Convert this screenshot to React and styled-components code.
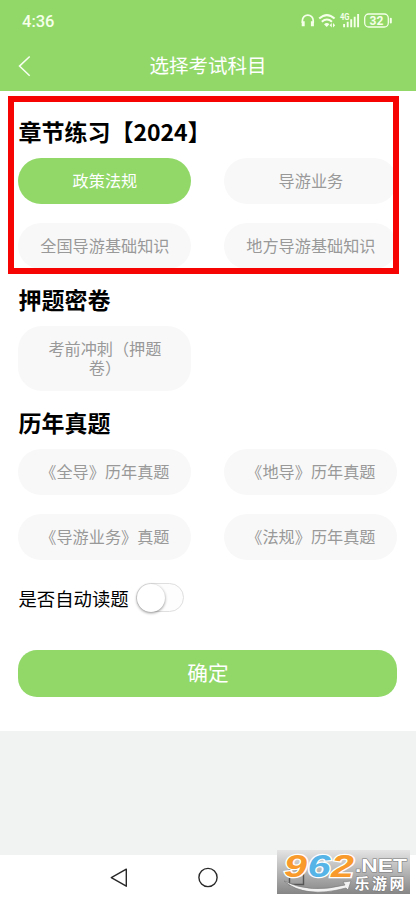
import React, { useState } from 'react';
import styled, { createGlobalStyle } from 'styled-components';

const GREEN = '#91d869';

const GlobalStyle = createGlobalStyle`
  * { box-sizing: border-box; }
  body { margin: 0; background: #f0f3f2; }
  button { font: inherit; border: 0; padding: 0; }
`;

const Screen = styled.div`
  position: relative;
  display: flex;
  flex-direction: column;
  width: 416px;
  height: 900px;
  overflow: hidden;
  background: #f0f3f2;
  font-family: "Noto Sans CJK SC", sans-serif;
`;

const Header = styled.header`
  height: 91px;
  flex: none;
  background: ${GREEN};
  color: #fff;
`;

const StatusBar = styled.div`
  display: flex;
  justify-content: space-between;
  height: 41px;
  padding: 0 23px 0 22px;
`;

const Clock = styled.span`
  font: 500 16.5px/43px Roboto, sans-serif;
  color: #f5ffe9;
`;

const StatusIcons = styled.svg`
  width: 92px;
  height: 41px;
  color: #f5ffe9;
`;

const TitleBar = styled.div`
  display: grid;
  grid-template-columns: 48px 1fr 48px;
  height: 50px;
`;

const BackButton = styled.button`
  display: flex;
  align-items: flex-start;
  padding: 13px 0 0 16px;
  background: none;
  color: #f8fff2;
`;

const PageTitle = styled.h1`
  margin: 0;
  text-align: center;
  font-size: 19.5px;
  font-weight: 400;
  line-height: 47px;
`;

const Content = styled.main`
  flex: none;
  height: 640.4px;
  padding: 23.5px 18.4px 0;
  background: #fff;
`;

const Section = styled.section`
  margin-bottom: ${(p) => p.$gap}px;
`;

const SectionTitle = styled.h2`
  margin: 0 0 10px;
  height: 33px;
  font-size: 23px;
  font-weight: 700;
  line-height: 33px;
  color: #000;
`;

const Options = styled.div`
  display: grid;
  grid-template-columns: 173px 173px;
  column-gap: 33px;
  row-gap: 18.5px;
`;

const Option = styled.button`
  min-height: 46.5px;
  padding: 13px 20px 14px;
  border-radius: 24px;
  background: ${(p) => (p.$active ? GREEN : '#f8f8f8')};
  color: ${(p) => (p.$active ? '#fff' : '#999')};
  font-size: 16.15px;
  line-height: 19px;
`;

const SettingRow = styled.label`
  display: flex;
  align-items: center;
  gap: 7px;
  height: 30px;
  font-size: 18.4px;
  line-height: 28px;
`;

const Toggle = styled.button`
  width: 48px;
  height: 29.5px;
  border: 1px solid #dfdfdf;
  border-radius: 15px;
  background: #fdfdfd;
`;

const Thumb = styled.span`
  display: block;
  width: 28.5px;
  height: 28.5px;
  margin-left: ${(p) => (p.$on ? 18 : 0)}px;
  border-radius: 50%;
  background: #fff;
  box-shadow: 0 1px 3px rgba(0, 0, 0, 0.45);
`;

const ConfirmButton = styled.button`
  display: block;
  width: 379px;
  height: 47.5px;
  margin-top: 37px;
  padding-bottom: 3px;
  border-radius: 19px;
  background: ${GREEN};
  color: #fff;
  font-size: 20.7px;
`;

const SystemNav = styled.nav`
  height: 45px;
  margin-top: auto;
  background: #fff;
  svg { display: block; }
`;

const Highlight = styled.div`
  position: absolute;
  left: 8px;
  top: 96px;
  width: 391px;
  height: 178px;
  border: 6px solid #f60303;
  pointer-events: none;
`;

const Watermark = styled.svg`
  position: absolute;
  left: 277px;
  top: 850px;
`;

const SECTIONS = [
  { title: '章节练习【2024】', gap: 14, items: ['政策法规', '导游业务', '全国导游基础知识', '地方导游基础知识'] },
  { title: '押题密卷', gap: 14.5, items: ['考前冲刺（押题卷）'] },
  { title: '历年真题', gap: 22.5, items: ['《全导》历年真题', '《地导》历年真题', '《导游业务》真题', '《法规》历年真题'] },
];

function DeviceStatus() {
  return (
    <StatusIcons viewBox="301 0 92 41" fill="none" stroke="currentColor">
      <path d="M302.4 23v-2.5a5.4 5.4 0 0 1 10.8 0V23" strokeWidth="1.7" />
      <path d="M303.2 21.3v5M312.4 21.3v5" strokeWidth="3" />
      <path d="M319.2 18.6q7.7-7 15.4 0M321.8 21.7q5.1-4.4 10.2 0" strokeWidth="2" />
      <path d="M324 24.2q2.9-2.4 5.4 0l-2.7 2.8z" fill="currentColor" stroke="none" />
      <path d="m331.8 23-2.2 2.3 2.2 2.3zm1.2 0 2.2 2.3-2.2 2.3z" fill="currentColor" stroke="none" />
      <text x="340" y="20" fontFamily="Roboto, sans-serif" fontSize="8.5" fontWeight="700" textLength="9.5" lengthAdjust="spacingAndGlyphs" fill="currentColor" stroke="none">4G</text>
      <path d="M344.1 24v3.2M347.7 21.8v5.4M351.2 19.2v8M354.7 16.8v10.4M358.1 14v13.2" strokeWidth="1.9" />
      <rect x="364.7" y="14" width="23.6" height="13" rx="4" strokeWidth="1.3" />
      <path d="M390.8 18.7v3.7" strokeWidth="2" strokeLinecap="round" />
      <text x="376.5" y="25" textAnchor="middle" fontFamily="Roboto, sans-serif" fontSize="12" fontWeight="700" fill="currentColor" stroke="none">32</text>
    </StatusIcons>
  );
}

function SiteMark() {
  return (
    <Watermark width="133" height="44" viewBox="0 0 133 44">
      <defs>
        <linearGradient id="plate" x1="0" y1="0" x2="0" y2="1">
          <stop offset="0" stopColor="#e4e4e4" />
          <stop offset="1" stopColor="#868686" />
        </linearGradient>
      </defs>
      <rect width="133" height="44" fill="url(#plate)" />
      <path d="M12.5 19.5h14v15h-14z" fill="none" stroke="#555" strokeWidth="1.4" />
      <path d="M7 31q26 13 61 4l-2-3 8-1-3 9-2-2Q28 49 7 31z" fill="#f2f2f2" stroke="#777" strokeWidth=".6" />
      <g fontFamily="Liberation Sans, sans-serif" fontSize="31" fontWeight="700" fontStyle="italic" stroke="#fff" strokeWidth="2.4" paintOrder="stroke">
        <text x="7" y="27" textLength="23" lengthAdjust="spacingAndGlyphs" fill="#f89b2c">9</text>
        <text x="30.5" y="27" textLength="23" lengthAdjust="spacingAndGlyphs" fill="#56b4e7">6</text>
        <text x="54" y="27" textLength="23" lengthAdjust="spacingAndGlyphs" fill="#f89b2c">2</text>
      </g>
      <g fill="#fff" stroke="#777" strokeWidth="1" paintOrder="stroke">
        <text x="78" y="21.5" fontFamily="Liberation Sans, sans-serif" fontSize="18.5" fontWeight="700" textLength="52" lengthAdjust="spacingAndGlyphs">.NET</text>
        <text x="77.5" y="39" fontFamily="Noto Sans CJK SC, sans-serif" fontSize="15" fontWeight="700" textLength="50">乐游网</text>
      </g>
    </Watermark>
  );
}

export default function App() {
  const [selected, setSelected] = useState('政策法规');
  const [autoRead, setAutoRead] = useState(false);

  return (
    <Screen>
      <GlobalStyle />
      <Header>
        <StatusBar>
          <Clock>4:36</Clock>
          <DeviceStatus />
        </StatusBar>
        <TitleBar>
          <BackButton aria-label="返回">
            <svg width="20" height="24" viewBox="0 0 20 24" fill="none" stroke="currentColor" strokeWidth="1.5">
              <path d="M13.7 2.5 3.5 12.1l10.2 9.6" />
            </svg>
          </BackButton>
          <PageTitle>选择考试科目</PageTitle>
        </TitleBar>
      </Header>
      <Content>
        {SECTIONS.map((section) => (
          <Section key={section.title} $gap={section.gap}>
            <SectionTitle>{section.title}</SectionTitle>
            <Options>
              {section.items.map((item) => (
                <Option key={item} $active={item === selected} onClick={() => setSelected(item)}>
                  {item}
                </Option>
              ))}
            </Options>
          </Section>
        ))}
        <SettingRow>
          是否自动读题
          <Toggle role="switch" aria-checked={autoRead} onClick={() => setAutoRead(!autoRead)}>
            <Thumb $on={autoRead} />
          </Toggle>
        </SettingRow>
        <ConfirmButton>确定</ConfirmButton>
      </Content>
      <SystemNav>
        <svg width="416" height="45" viewBox="0 855 416 45" fill="none" stroke="#282828" strokeWidth="1.4" strokeLinejoin="round">
          <path d="M126.3 869.2v17l-15-8.5z" />
          <circle cx="208" cy="877.5" r="9.1" />
          <rect x="289.5" y="869.5" width="15" height="15" rx="1" />
        </svg>
      </SystemNav>
      <Highlight />
      <SiteMark />
    </Screen>
  );
}
